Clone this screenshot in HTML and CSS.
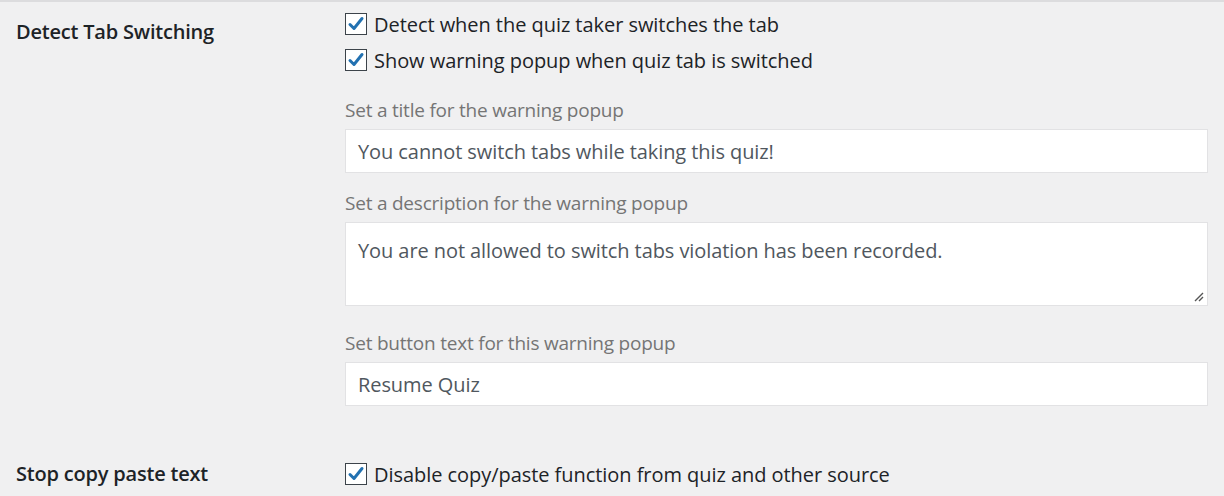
FILE: index.html
```html
<!DOCTYPE html>
<html>
<head>
<meta charset="utf-8">
<link rel="stylesheet" href="styles.css">
</head>
<body>
<div class="page">
  <div class="row row-first">
    <div class="label">Detect Tab Switching</div>
    <div class="field">
      <label class="check"><span class="box"><svg viewBox="0 0 20 20" width="20" height="20"><path d="M4 10.5 L8 14.5 L16 4.5" fill="none" stroke="#2271b1" stroke-width="3" stroke-linecap="round" stroke-linejoin="round"/></svg></span>Detect when the quiz taker switches the tab</label>
      <label class="check"><span class="box"><svg viewBox="0 0 20 20" width="20" height="20"><path d="M4 10.5 L8 14.5 L16 4.5" fill="none" stroke="#2271b1" stroke-width="3" stroke-linecap="round" stroke-linejoin="round"/></svg></span>Show warning popup when quiz tab is switched</label>
      <div class="sub">
        <div class="sublabel">Set a title for the warning popup</div>
        <div class="input">You cannot switch tabs while taking this quiz!</div>
        <div class="sublabel">Set a description for the warning popup</div>
        <div class="textarea">You are not allowed to switch tabs violation has been recorded.<svg class="grip" viewBox="0 0 12 12" width="12" height="12"><path d="M11 3 L3 11 M11 7 L7 11" stroke="#555" stroke-width="1.4"/></svg></div>
        <div class="sublabel">Set button text for this warning popup</div>
        <div class="input">Resume Quiz</div>
      </div>
    </div>
  </div>
  <div class="row row-second">
    <div class="label">Stop copy paste text</div>
    <div class="field">
      <label class="check"><span class="box"><svg viewBox="0 0 20 20" width="20" height="20"><path d="M4 10.5 L8 14.5 L16 4.5" fill="none" stroke="#2271b1" stroke-width="3" stroke-linecap="round" stroke-linejoin="round"/></svg></span>Disable copy/paste function from quiz and other source</label>
    </div>
  </div>
</div>
</body>
</html>
```

FILE: styles.css
```css
html, body {
  margin: 0;
  padding: 0;
  background: #f0f0f1;
}
body {
  font-family: "Open Sans", "Noto Sans", sans-serif;
  color: #1d2327;
  font-size: 20px;
  width: 1224px;
  height: 496px;
  overflow: hidden;
}
.page {
  border-top: 2px solid #dcdcde;
}
.row {
  display: flex;
}
.label {
  width: 329px;
  padding-left: 16px;
  font-weight: 600;
  color: #1d2327;
  font-size: 20px;
  line-height: 36px;
  letter-spacing: -0.2px;
}
.row-first .label {
  padding-top: 12px;
}
.field {
  flex: 1;
  padding-right: 16px;
}
.row-first .field {
  padding-top: 4px;
}
.check {
  display: flex;
  align-items: center;
  height: 36px;
  letter-spacing: -0.05px;
  color: #1d2327;
}
.box {
  width: 20px;
  height: 20px;
  border: 1.5px solid #3c434a;
  background: #fff;
  margin-right: 7px;
  display: flex;
  align-items: center;
  justify-content: center;
  flex: none;
}
.sub {
  padding-top: 18px;
}
.sublabel {
  color: #757575;
  font-size: 19px;
  letter-spacing: -0.22px;
  height: 28px;
  line-height: 28px;
  margin-bottom: 5px;
}
.input, .textarea {
  background: #fff;
  border: 1px solid #e2e2e4;
  box-sizing: border-box;
  color: #50575e;
  padding: 0 12px;
  font-size: 20px;
  letter-spacing: -0.08px;
}
.input {
  height: 44px;
  line-height: 44px;
  margin-bottom: 16px;
}
.textarea {
  height: 84px;
  padding-top: 14px;
  line-height: 28px;
  position: relative;
  margin-bottom: 23px;
}
.grip {
  position: absolute;
  right: 3px;
  bottom: 3px;
}
.row-second {
  margin-top: 34px;
}
```
